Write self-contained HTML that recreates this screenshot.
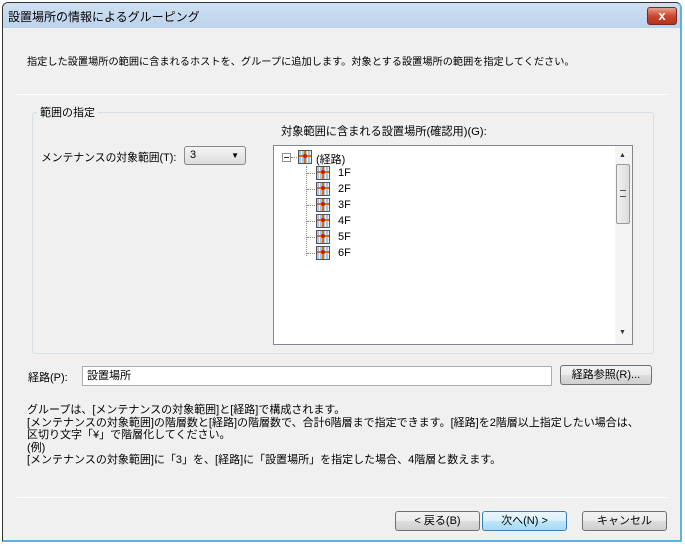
<!DOCTYPE html>
<html><head><meta charset="utf-8"><style>
*{margin:0;padding:0;box-sizing:border-box}
body{width:685px;height:547px;background:#fff;position:relative;overflow:hidden;font-family:"Liberation Sans","Noto Sans CJK JP",sans-serif;font-size:11px;color:#000}
.a{position:absolute;white-space:nowrap}
.win{position:absolute;left:2px;top:2px;width:680px;height:540px;background:#f0f0f0;border:1px solid #333;border-right:2px solid #5ab4e0;border-bottom:2px solid #5ab4e0;border-radius:6px 6px 0 0}
.title{position:absolute;left:0;top:0;right:0;height:25px;background:linear-gradient(#cfe0f2,#bcd3ec);border-radius:5px 5px 0 0}
.btn{position:absolute;height:20px;border:1px solid #707070;border-radius:3px;background:linear-gradient(#f2f2f2,#ebebeb 50%,#dddddd 51%,#cfcfcf);text-align:center;line-height:18px;font-size:11px}
.ico{position:absolute;width:14px;height:14px;border:1px solid #555;background:
linear-gradient(90deg,transparent 5px,#e86a10 5px,#e86a10 7px,transparent 7px),
linear-gradient(transparent 4px,#e86a10 4px,#e86a10 6px,transparent 6px),
repeating-linear-gradient(90deg,#a8c8e0 0 2px,#e8f0f8 2px 3px);}
.ico:after{content:"";position:absolute;left:4px;top:3px;width:4px;height:4px;background:#c02000;border-radius:2px}
</style></head><body>
<div class="win">
 <div class="title"></div>
 <div class="a" style="left:5px;top:5px;font-size:12px">設置場所の情報によるグルーピング</div>
 <div class="a" style="left:644px;top:4px;width:30px;height:18px;border:1px solid #7a2a20;border-radius:3px;background:linear-gradient(#e8a090,#c84830 50%,#b83020);color:#fff;font-weight:bold;text-align:center;line-height:16px;font-size:13px">x</div>
 <div class="a" style="left:24px;top:50px;font-size:10.2px">指定した設置場所の範囲に含まれるホストを、グループに追加します。対象とする設置場所の範囲を指定してください。</div>
 <div class="a" style="left:14px;top:91px;width:651px;height:1px;background:#a0a0a0;border-bottom:1px solid #fff"></div>
 <div class="a" style="left:29px;top:109px;width:622px;height:242px;border:1px solid #d5dfe5;border-radius:3px"></div>
 <div class="a" style="left:34px;top:101px;background:#f0f0f0;padding:0 3px">範囲の指定</div>
 <div class="a" style="left:38px;top:146px;font-size:10.8px">メンテナンスの対象範囲(T):</div>
 <div class="a" style="left:181px;top:143px;width:62px;height:19px;border:1px solid #8a8a8a;border-radius:3px;background:linear-gradient(#f4f4f4,#dcdcdc);padding-left:5px;line-height:17px">3<span style="position:absolute;right:6px;top:0;font-size:8px">▼</span></div>
 <div class="a" style="left:278px;top:120px;font-size:11.2px">対象範囲に含まれる設置場所(確認用)(G):</div>
 <div class="a" style="left:270px;top:142px;width:360px;height:200px;border:1px solid #828790;background:#fff">
  <div class="a" style="left:341px;top:0;width:17px;height:198px;background:#f4f4f4">
   <div class="a" style="left:4px;top:6px;font-size:7px;color:#333">▲</div>
   <div class="a" style="left:1px;top:18px;width:14px;height:60px;border:1px solid #999;border-radius:2px;background:linear-gradient(90deg,#f0f0f0,#dcdcdc)"><div class="a" style="left:3px;top:25px;width:6px;height:7px;border-top:1px solid #555;border-bottom:1px solid #555"></div></div>
   <div class="a" style="left:4px;top:183px;font-size:7px;color:#333">▼</div>
  </div>
  <div class="a" style="left:8px;top:7px;width:9px;height:9px;border:1px solid #919191;background:#fff"><div class="a" style="left:1px;top:3px;width:5px;height:1px;background:#333"></div></div>
  <div class="a" style="left:17px;top:11px;width:8px;border-top:1px dotted #888"></div>
  <div class="a" style="left:32px;top:20px;height:90px;border-left:1px dotted #888"></div>
  <div class="ico" style="left:24px;top:4px"></div>
  <div class="a" style="left:42px;top:5px">(経路)</div>
  <div class="a" style="left:33px;top:27px;width:8px;border-top:1px dotted #888"></div><div class="ico" style="left:42px;top:20px"></div><div class="a" style="left:64px;top:21px">1F</div>
  <div class="a" style="left:33px;top:43px;width:8px;border-top:1px dotted #888"></div><div class="ico" style="left:42px;top:36px"></div><div class="a" style="left:64px;top:37px">2F</div>
  <div class="a" style="left:33px;top:59px;width:8px;border-top:1px dotted #888"></div><div class="ico" style="left:42px;top:52px"></div><div class="a" style="left:64px;top:53px">3F</div>
  <div class="a" style="left:33px;top:75px;width:8px;border-top:1px dotted #888"></div><div class="ico" style="left:42px;top:68px"></div><div class="a" style="left:64px;top:69px">4F</div>
  <div class="a" style="left:33px;top:91px;width:8px;border-top:1px dotted #888"></div><div class="ico" style="left:42px;top:84px"></div><div class="a" style="left:64px;top:85px">5F</div>
  <div class="a" style="left:33px;top:107px;width:8px;border-top:1px dotted #888"></div><div class="ico" style="left:42px;top:100px"></div><div class="a" style="left:64px;top:101px">6F</div>
 </div>
 <div class="a" style="left:25px;top:366px">経路(P):</div>
 <div class="a" style="left:79px;top:363px;width:470px;height:20px;border:1px solid #abadb3;background:#fff;padding-left:4px;line-height:18px">設置場所</div>
 <div class="btn" style="left:557px;top:362px;width:92px">経路参照(R)...</div>
 <div class="a" style="left:24px;top:401px;line-height:12.5px;font-size:11px">グループは、[メンテナンスの対象範囲]と[経路]で構成されます。<br>[メンテナンスの対象範囲]の階層数と[経路]の階層数で、合計6階層まで指定できます。[経路]を2階層以上指定したい場合は、<br>区切り文字「¥」で階層化してください。<br>(例)<br>[メンテナンスの対象範囲]に「3」を、[経路]に「設置場所」を指定した場合、4階層と数えます。</div>
 <div class="a" style="left:14px;top:494px;width:651px;height:1px;background:#a0a0a0;border-bottom:1px solid #fff"></div>
 <div class="btn" style="left:392px;top:508px;width:85px">&lt; 戻る(B)</div>
 <div class="btn" style="left:479px;top:508px;width:85px;border-color:#3c7fb1;background:linear-gradient(#eaf6fd,#d9f0fc 50%,#bee6fd 51%,#a7d9f5)">次へ(N) &gt;</div>
 <div class="btn" style="left:579px;top:508px;width:85px">キャンセル</div>
</div>
</body></html>
